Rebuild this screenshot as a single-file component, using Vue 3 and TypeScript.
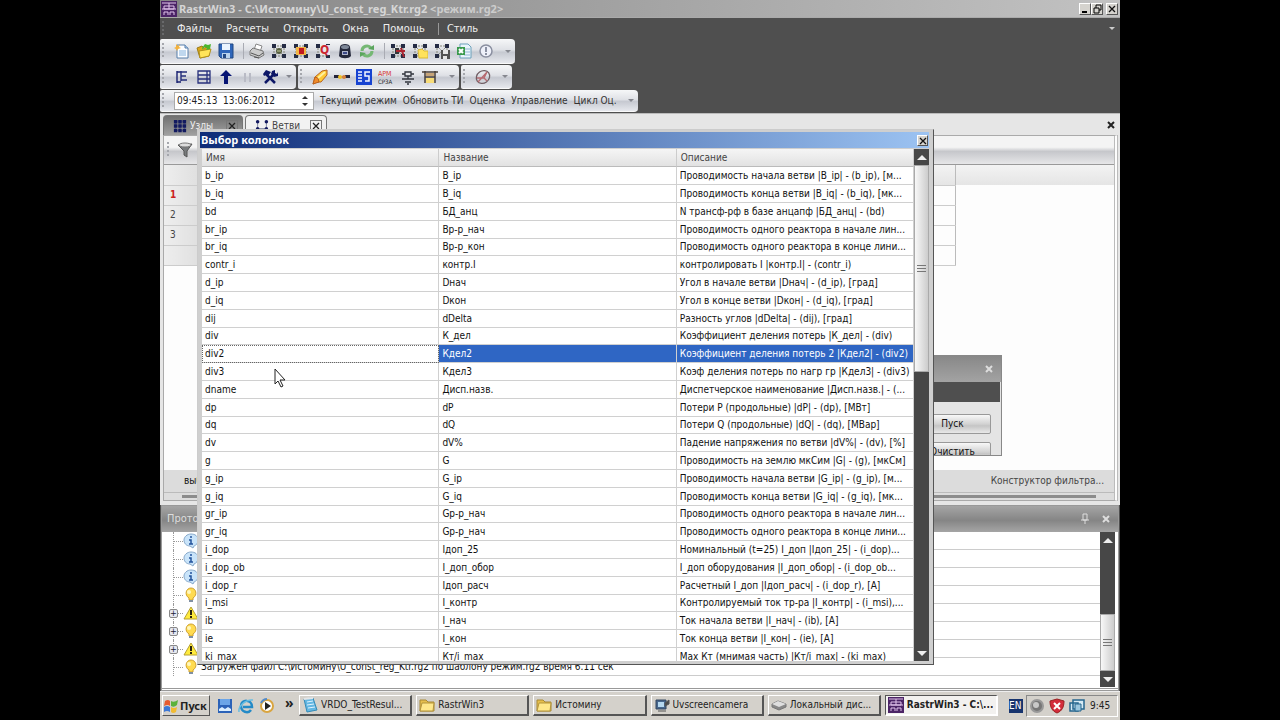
<script setup lang="ts">
import { ref } from 'vue'

interface Column { name: string; title: string; info: string }
interface LogNode { icon: string; expandable: boolean; text: string }

const menus = ['Файлы', 'Расчеты', 'Открыть', 'Окна', 'Помощь']
const fileTools = ['new', 'open', 'save', '|', 'print', 'net', 'netred', 'netq', 'db', 'refresh', '|', 'netcut', 'netopen', 'netsave', 'excel', 'clock']
const viewTools = ['tree', 'list', 'up', 'pause', 'tools']
const modeTools = ['eraser', 'link', 'digits', 'arm', 'ground', 'bridge']
const telemetry = ['Текущий режим', 'Обновить ТИ', 'Оценка', 'Управление', 'Цикл Оц.']
const clock = ref('09:45:13  13:06:2012')
const selected = ref('div2')

const columns: Column[] = [
  { name: 'b_ip', title: 'B_ip', info: 'Проводимость начала ветви |B_ip| - (b_ip), [м...' },
  { name: 'b_iq', title: 'B_iq', info: 'Проводимость конца ветви |B_iq| - (b_iq), [мк...' },
  { name: 'bd', title: 'БД_анц', info: 'N трансф-рф в базе анцапф |БД_анц| - (bd)' },
  { name: 'br_ip', title: 'Вр-р_нач', info: 'Проводимость одного реактора в начале лин...' },
  { name: 'br_iq', title: 'Вр-р_кон', info: 'Проводимость одного реактора в конце лини...' },
  { name: 'contr_i', title: 'контр.I', info: 'контролировать I |контр.I| - (contr_i)' },
  { name: 'd_ip', title: 'Dнач', info: 'Угол в начале ветви |Dнач| - (d_ip), [град]' },
  { name: 'd_iq', title: 'Dкон', info: 'Угол в конце ветви |Dкон| - (d_iq), [град]' },
  { name: 'dij', title: 'dDelta', info: 'Разность углов |dDelta| - (dij), [град]' },
  { name: 'div', title: 'К_дел', info: 'Коэффициент деления потерь |К_дел| - (div)' },
  { name: 'div2', title: 'Кдел2', info: 'Коэффициент деления потерь 2 |Кдел2| - (div2)' },
  { name: 'div3', title: 'Кдел3', info: 'Коэф деления потерь по нагр гр |Кдел3| - (div3)' },
  { name: 'dname', title: 'Дисп.назв.', info: 'Диспетчерское наименование |Дисп.назв.| - (...' },
  { name: 'dp', title: 'dP', info: 'Потери P (продольные) |dP| - (dp), [МВт]' },
  { name: 'dq', title: 'dQ', info: 'Потери Q (продольные) |dQ| - (dq), [МВар]' },
  { name: 'dv', title: 'dV%', info: 'Падение напряжения по ветви |dV%| - (dv), [%]' },
  { name: 'g', title: 'G', info: 'Проводимость на землю мкСим |G| - (g), [мкСм]' },
  { name: 'g_ip', title: 'G_ip', info: 'Проводимость начала ветви |G_ip| - (g_ip), [м...' },
  { name: 'g_iq', title: 'G_iq', info: 'Проводимость конца ветви |G_iq| - (g_iq), [мк...' },
  { name: 'gr_ip', title: 'Gр-р_нач', info: 'Проводимость одного реактора в начале лин...' },
  { name: 'gr_iq', title: 'Gр-р_нач', info: 'Проводимость одного реактора в конце лини...' },
  { name: 'i_dop', title: 'Iдоп_25', info: 'Номинальный (t=25) I_доп |Iдоп_25| - (i_dop)...' },
  { name: 'i_dop_ob', title: 'I_доп_обор', info: 'I_доп оборудования |I_доп_обор| - (i_dop_ob...' },
  { name: 'i_dop_r', title: 'Iдоп_расч', info: 'Расчетный I_доп |Iдоп_расч| - (i_dop_r), [А]' },
  { name: 'i_msi', title: 'I_контр', info: 'Контролируемый ток тр-ра |I_контр| - (i_msi),...' },
  { name: 'ib', title: 'I_нач', info: 'Ток начала ветви |I_нач| - (ib), [А]' },
  { name: 'ie', title: 'I_кон', info: 'Ток конца ветви |I_кон| - (ie), [А]' },
  { name: 'ki_max', title: 'Кт/i_max', info: 'Max Кт (мнимая часть) |Кт/i_max| - (ki_max)' },
]

const log: LogNode[] = [
  { icon: 'info', expandable: false, text: '' },
  { icon: 'info', expandable: false, text: '' },
  { icon: 'info', expandable: false, text: '' },
  { icon: 'bulb', expandable: false, text: '' },
  { icon: 'warn', expandable: true, text: '' },
  { icon: 'bulb', expandable: true, text: '' },
  { icon: 'warn', expandable: true, text: '' },
  { icon: 'bulb', expandable: false, text: 'Загружен файл C:\\Истомину\\U_const_reg_Ktr.rg2 по шаблону режим.rg2 время 6.11 сек' },
]

const tasks = [
  { icon: 'note', label: 'VRDO_TestResul...' },
  { icon: 'folder', label: 'RastrWin3' },
  { icon: 'folder', label: 'Истомину' },
  { icon: 'camera', label: 'Uvscreencamera' },
  { icon: 'disk', label: 'Локальный дис...' },
  { icon: 'rastr', label: 'RastrWin3 - C:\\...' },
]
</script>

<template>
  <svg class="defs" aria-hidden="true">
    <defs>
      <symbol id="rastr" viewBox="0 0 16 16"><rect width="16" height="16" fill="#4b2466" /><path d="M1 2h14M3 5h10v3H3zM1 8h14M3 14v-3h4v3M9 14v-3h4v3M8 2v6" fill="none" stroke="#e2c4ec" /></symbol>
      <symbol id="new" viewBox="0 0 16 16"><path d="M3 2h8l3 3v10H3z" fill="#fcfdff" stroke="#577eaa" /><path d="M5 7h7v6H5z" fill="#bfd7ee" /><path d="M11 2v3h3" fill="#b5d0ef" stroke="#577eaa" /><path d="M2 1l2 2 2-2-1 3 2 1-3 1-1 2-1-2-2-1 2-1z" fill="#f5b23b" /></symbol>
      <symbol id="open" viewBox="0 0 16 16"><path d="M1 5l5-2 2 2 5-1v9l-9 2z" fill="#dda719" stroke="#9c7c18" /><path d="M3 8l12-2-2 7-9 2z" fill="#ffe45a" stroke="#b3911b" /><path d="M6 5l3-4 3 1 3-1-1 5-4 1 1-2-3-1-1 3z" fill="#4bb62e" /></symbol>
      <symbol id="save" viewBox="0 0 16 16"><path d="M1 1h14v14H3l-2-2z" fill="#2f66ba" stroke="#214680" /><path d="M4 1h8v6H4z" fill="#eaf4ff" /><path d="M4 10h8v5H4z" fill="#b9d2ed" /><path d="M5 11h3v4H5z" fill="#244983" /></symbol>
      <symbol id="print" viewBox="0 0 16 16"><path d="M5 7l2-6 6 2-2 6z" fill="#fff" stroke="#888" /><path d="M1 8l3-3 10 3 1 4-5 3-9-3z" fill="#ccc" stroke="#777" /><path d="M2 10l8 3 4-3M5 14l5 1" stroke="#555" fill="none" /></symbol>
      <symbol id="netbase" viewBox="0 0 16 16"><path d="M3 3h10v10H3zM3 3l10 10M13 3L3 13" fill="none" stroke="#858779" stroke-dasharray="2 1" /><path d="M1 1h4v4H1zM11 1h4v4h-4zM1 11h4v4H1zM11 11h4v4h-4z" fill="#252c45" /></symbol>
      <symbol id="net" viewBox="0 0 16 16"><use href="#netbase" /><circle cx="8" cy="8" r="3" fill="#555e40" /><path d="M6 8h4" stroke="#c6cc9a" /></symbol>
      <symbol id="netred" viewBox="0 0 16 16"><use href="#netbase" /><path d="M3 4h10v8H3z" fill="#f2b545" /><path d="M6 5h5v6H6z" fill="#c01820" /></symbol>
      <symbol id="netq" viewBox="0 0 16 16"><use href="#netbase" /><path d="M5 2h10v10H5z" fill="#e6e7ea" /><text x="5" y="11" font-size="12" font-weight="700" fill="#cc2630">Q</text></symbol>
      <symbol id="db" viewBox="0 0 16 16"><path d="M3 4c0-4 10-4 10 0l1 9c-2 3-10 3-12 0z" fill="#25293b" /><ellipse cx="8" cy="4" rx="4" ry="2" fill="#7d8798" /><path d="M5 8h6v4H5z" fill="#aeb5cb" /><path d="M6 9h4v2H6z" fill="#3d4a88" /></symbol>
      <symbol id="refresh" viewBox="0 0 16 16"><path d="M3 8a5 5 0 0 1 9-3M13 8a5 5 0 0 1-9 3" fill="none" stroke="#75b874" stroke-width="3" /><path d="M9 6l6-4v5zM7 10l-6 4V9z" fill="#5aa55d" /></symbol>
      <symbol id="netcut" viewBox="0 0 16 16"><use href="#netbase" /><path d="M5 5h4v6H5z" fill="#34383b" /><path d="M6 8h9M11 5l3 9" stroke="#ac2430" stroke-width="2" /></symbol>
      <symbol id="netopen" viewBox="0 0 16 16"><use href="#netbase" /><path d="M6 7l4-1 2 2h4v7H7z" fill="#ffe25b" stroke="#dbba37" /></symbol>
      <symbol id="netsave" viewBox="0 0 16 16"><use href="#netbase" /><path d="M7 7h9v9H7z" fill="#555" /><path d="M9 7h5v4H9zM9 13h4v3H9z" fill="#e8e8e8" /></symbol>
      <symbol id="excel" viewBox="0 0 16 16"><path d="M4 1h8l3 3v11H4z" fill="#e9f4fb" stroke="#6da1bb" /><path d="M8 6h6M8 9h6M8 12h6" stroke="#91b7d2" /><path d="M1 4h8v8H1z" fill="#3a9a4d" /><path d="M3 6l4 4M7 6l-4 4" stroke="#fff" stroke-width="2" /></symbol>
      <symbol id="clock" viewBox="0 0 16 16"><circle cx="8" cy="8" r="6" fill="#eef0f9" stroke="#8a8fa0" stroke-width="1.5" /><path d="M8 4v5M8 10v2" stroke="#6b7187" stroke-width="1.5" /></symbol>
      <symbol id="tree" viewBox="0 0 16 16"><path d="M3 2v12M3 3h4M3 13h4" stroke="#172070" stroke-width="1.4" fill="none" /><path d="M7 3h6M7 7h5M7 11h6M7 2v10" stroke="#27307c" stroke-width="1.4" /></symbol>
      <symbol id="list" viewBox="0 0 16 16"><path d="M2 2h12v12H2zM2 6h12M2 10h12M11 2v12" fill="none" stroke="#27307c" stroke-width="1.3" /></symbol>
      <symbol id="up" viewBox="0 0 16 16"><path d="M8 1l6 6h-4v8H6V7H2z" fill="#061474" /></symbol>
      <symbol id="pause" viewBox="0 0 16 16"><path d="M5 4v9M10 4v9" stroke="#b9bbc5" stroke-width="2" /></symbol>
      <symbol id="tools" viewBox="0 0 16 16"><path d="M4 5l9 9M12 5l-9 9" stroke="#0d1767" stroke-width="2.5" /><path d="M1 5l3-4 5 2-3 4-2-1-2 1zM10 2l3-1v3l2 1 1-2v4l-4 1-3-3z" fill="#0d1767" /></symbol>
      <symbol id="eraser" viewBox="0 0 16 16"><path d="M1 15l2-7 7-6 5-1v5l-6 7-4 0z" fill="#ffc936" stroke="#b8611d" /><path d="M3 8l3 1 1 4-6 2z" fill="#f08b2c" stroke="#b8611d" /><path d="M6 9l7-6" stroke="#fff0a0" stroke-width="2" /></symbol>
      <symbol id="link" viewBox="0 0 16 16"><path d="M0 8h16" stroke="#7c4938" /><path d="M0 6h5v3H0zM11 6h5v3h-5z" fill="#24243b" /><circle cx="6" cy="8" r="2" fill="#eec126" /><circle cx="10" cy="8" r="2" fill="#d9813a" /></symbol>
      <symbol id="digits" viewBox="0 0 16 16"><path d="M0 0h16v16H0z" fill="#1743d1" /><path d="M2 3h4M2 6h4M2 9h4M2 12h4M14 3H9v4h4v5H9" fill="none" stroke="#f5f7ff" stroke-width="1.5" /></symbol>
      <symbol id="arm" viewBox="0 0 16 16"><text x="0" y="7" font-size="7" fill="#d63432">АРМ</text><text x="0" y="15" font-size="6" fill="#272727">СРЗА</text></symbol>
      <symbol id="ground" viewBox="0 0 16 16"><path d="M2 5h3M11 5h3M5 3h6v4H5zM8 7v3M2 10h12M5 13h6M7 15h2" fill="none" stroke="#30343d" stroke-width="1.3" /></symbol>
      <symbol id="bridge" viewBox="0 0 16 16"><path d="M0 3h16M3 2v12M13 2v12M3 8h10" fill="none" stroke="#4a4038" stroke-width="1.5" /><path d="M4 4h8v3H4z" fill="#c7a477" /><path d="M4 9h8v5H4z" fill="#f7dc78" /></symbol>
      <symbol id="meter" viewBox="0 0 16 16"><ellipse cx="8" cy="8" rx="7" ry="6" transform="rotate(-35 8 8)" fill="none" stroke="#705e64" stroke-width="1.3" /><path d="M3 13L12 3l-3 6M2 9h7l3 3" fill="none" stroke="#b76a70" stroke-width="1.3" /></symbol>
      <symbol id="nodes" viewBox="0 0 16 16"><path d="M3 3h10v10H3zM3 8h10M8 3v10" fill="none" stroke="#5d6484" /><path d="M1 1h4v4H1zM6 1h4v4H6zM11 1h4v4h-4zM1 6h4v4H1zM6 6h4v4H6zM11 6h4v4h-4zM1 11h4v4H1zM6 11h4v4H6zM11 11h4v4h-4z" fill="#131a60" /></symbol>
      <symbol id="branches" viewBox="0 0 16 16"><path d="M3 3v8M13 3v8M3 11h10" fill="none" stroke="#737c99" /><circle cx="3" cy="3" r="2" fill="#131a60" /><circle cx="13" cy="3" r="2" fill="#131a60" /><circle cx="3" cy="11" r="2" fill="#131a60" /><circle cx="13" cy="11" r="2" fill="#131a60" /></symbol>
      <symbol id="funnel" viewBox="0 0 16 16"><path d="M1 3l14-1-5 7v6l-3-2V9z" fill="#777a7c" stroke="#555" /><ellipse cx="8" cy="3" rx="6" ry="2" fill="#ddd" stroke="#777" /></symbol>
      <symbol id="info" viewBox="0 0 16 16"><path d="M8 1c4 0 7 2 7 6s-2 5-4 6l-1 2-3-2c-4 0-6-3-6-6s3-6 7-6z" fill="#c9e4fa" stroke="#86a8ca" /><path d="M8 3v2M6 7h2v4M6 11h4" fill="none" stroke="#23539d" stroke-width="1.5" /></symbol>
      <symbol id="bulb" viewBox="0 0 16 16"><path d="M6 11C1 8 3 1 8 1s7 7 2 10v2H6z" fill="#ffdb50" stroke="#cfa12f" /><circle cx="6" cy="5" r="2" fill="#fff7bd" /><path d="M6 13h4v2H6z" fill="#8090a2" /></symbol>
      <symbol id="warn" viewBox="0 0 16 16"><path d="M8 2l7 12H1z" fill="#ffeb3d" stroke="#b6a033" /><path d="M8 5v5M8 11v2" stroke="#292410" stroke-width="2" /></symbol>
      <symbol id="windows" viewBox="0 0 16 16"><path d="M2 3q3-2 5 0v5q-2-2-6 0z" fill="#e65b30" /><path d="M8 3q3 2 7-1l-1 5q-3 3-6 1z" fill="#5ab23d" /><path d="M1 9q3-2 6 0v5q-3-2-6 0z" fill="#3c78d6" /><path d="M8 9q3 2 6 0l-1 5q-3 2-5 0z" fill="#f1bb32" /></symbol>
      <symbol id="desktop" viewBox="0 0 16 16"><path d="M1 1h14v14H1z" fill="#2b62b8" /><path d="M3 1h10v6H3z" fill="#6ba5e8" /><path d="M2 11l3-2 3 2 3-2 3 2v2H2z" fill="#dbefff" /></symbol>
      <symbol id="ie" viewBox="0 0 16 16"><path d="M13 12c-3 4-10 2-10-4 0-7 11-7 11 1H5" fill="none" stroke="#238ac7" stroke-width="2.5" /><path d="M1 14C0 8 8 1 15 2" fill="none" stroke="#67bde2" stroke-width="1.5" /></symbol>
      <symbol id="player" viewBox="0 0 16 16"><circle cx="8" cy="8" r="6" fill="#fff" stroke="#d9a540" stroke-width="2" /><path d="M2 5a7 7 0 0 1 6-4" stroke="#548bc9" stroke-width="2" fill="none" /><path d="M6 4l6 4-6 4z" fill="#222" /></symbol>
      <symbol id="note" viewBox="0 0 16 16"><path d="M2 2l9-1 4 12-10 2z" fill="#63b7e2" stroke="#348bb8" /><path d="M5 5l6-1M5 8l7-1M6 11l7-1" stroke="#dff3ff" /><path d="M2 2l9-1" stroke="#e3e6e8" stroke-width="2" /></symbol>
      <symbol id="folder" viewBox="0 0 16 16"><path d="M1 3h6l2 2h6v9H1z" fill="#e6bf4d" stroke="#a88934" /><path d="M3 6h12l-1 8H1z" fill="#ffe88a" stroke="#b3943c" /></symbol>
      <symbol id="camera" viewBox="0 0 16 16"><path d="M2 3h10v9H2z" fill="#47678e" stroke="#35475e" /><path d="M4 5h6v5H4z" fill="#b6d8ef" /><path d="M11 6l4-3v4l-4 2zM4 14h8" fill="#4a4a4a" stroke="#555" /></symbol>
      <symbol id="disk" viewBox="0 0 16 16"><path d="M1 7l6-3 8 3v3l-7 3-7-3z" fill="#888" stroke="#777" /><path d="M1 7l6-3 8 3-7 3z" fill="#dedede" /></symbol>
      <symbol id="sound" viewBox="0 0 16 16"><circle cx="8" cy="8" r="6" fill="#777" stroke="#999" stroke-width="2" /><circle cx="7" cy="7" r="3" fill="#c8c8c8" /></symbol>
      <symbol id="shield" viewBox="0 0 16 16"><path d="M8 1l7 2c0 6-2 10-7 12C3 13 1 9 1 3z" fill="#d32c3b" stroke="#922" /><path d="M5 5l6 6M11 5l-6 6" stroke="#fff" stroke-width="2" /></symbol>
      <symbol id="vm" viewBox="0 0 16 16"><path d="M1 5h8v8H1zM4 2h11v9H4z" fill="#d6eaf5" stroke="#26668e" stroke-width="1.5" /><path d="M6 6h6v7H6z" fill="#9dc7df" stroke="#26668e" /></symbol>
      <symbol id="pin" viewBox="0 0 10 12"><path d="M3 1h4v6H3zM1 7h8M5 7v4" fill="none" stroke="#ddd" /></symbol>
      <symbol id="cross" viewBox="0 0 10 10"><path d="M2 2l6 6M8 2L2 8" stroke="currentColor" stroke-width="2" /></symbol>
      <symbol id="thincross" viewBox="0 0 10 10"><path d="M2 2l6 6M8 2L2 8" stroke="currentColor" stroke-width="1.3" /></symbol>
    </defs>
  </svg>

  <div class="screen">
    <main class="desktop">
      <header class="titlebar">
        <svg class="ic"><use href="#rastr" /></svg>
        <h1>RastrWin3 - C:\Истомину\U_const_reg_Ktr.rg2 <span>&lt;режим.rg2&gt;</span></h1>
        <div class="winbtns">
          <button aria-label="Свернуть"><svg viewBox="0 0 10 10"><path d="M2 8h5" stroke="#000" stroke-width="2" /></svg></button>
          <button aria-label="Восстановить"><svg viewBox="0 0 10 10"><path d="M4 4V1h5v5H7M2 4h5v5H2z" fill="none" stroke="#000" /></svg></button>
          <button class="apart" aria-label="Закрыть"><svg><use href="#thincross" /></svg></button>
        </div>
      </header>

      <nav class="menubar">
        <i class="grip dim"></i>
        <button v-for="m in menus" :key="m">{{ m }}</button>
        <i class="bar"></i>
        <button>Стиль</button>
        <i class="arrow light"></i>
      </nav>

      <div class="toolrow">
        <div class="toolbar">
          <i class="grip"></i>
          <template v-for="(t, i) in fileTools" :key="i">
            <i v-if="t === '|'" class="sep"></i>
            <button v-else :aria-label="t"><svg class="ic"><use :href="'#' + t" /></svg></button>
          </template>
          <i class="arrow far"></i>
        </div>
      </div>
      <div class="toolrow second">
        <div class="toolbar"><i class="grip"></i><button v-for="t in viewTools" :key="t" :aria-label="t"><svg class="ic"><use :href="'#' + t" /></svg></button><i class="arrow"></i></div>
        <div class="toolbar"><i class="grip"></i><button v-for="t in modeTools" :key="t" :aria-label="t"><svg class="ic"><use :href="'#' + t" /></svg></button><i class="arrow far"></i></div>
        <div class="toolbar"><i class="grip"></i><button aria-label="Контроль"><svg class="ic"><use href="#meter" /></svg></button><i class="arrow far"></i></div>
      </div>
      <div class="toolrow third">
        <div class="toolbar">
          <i class="grip"></i>
          <div class="stamp"><input v-model="clock" aria-label="Время и дата"><span class="spin"><button class="u" aria-label="Больше"></button><button class="d" aria-label="Меньше"></button></span></div>
          <button v-for="t in telemetry" :key="t" class="txt">{{ t }}</button>
          <i class="arrow far"></i>
        </div>
      </div>

      <section class="work">
        <div class="tabs">
          <button class="tab off"><svg class="ic"><use href="#nodes" /></svg>Узлы<svg class="tx"><use href="#thincross" /></svg></button>
          <button class="tab"><svg class="ic"><use href="#branches" /></svg>Ветви<svg class="tx"><use href="#thincross" /></svg></button>
          <button class="plain" aria-label="Закрыть вкладку"><svg><use href="#cross" /></svg></button>
        </div>
        <div class="sheet">
          <div class="filterbar"><i class="grip"></i><svg class="ic"><use href="#funnel" /></svg></div>
          <div class="gridhead">
            <table class="branches">
              <tbody>
                <tr class="h"><th></th><td></td></tr>
                <tr><th class="red">1</th><td></td></tr>
                <tr><th>2</th><td></td></tr>
                <tr><th>3</th><td></td></tr>
                <tr><th></th><td></td></tr>
              </tbody>
            </table>
          </div>
          <div class="sheetfoot"><span>выбрано</span><a href="#">Конструктор фильтра...</a></div>
          <div class="hscroll"><i></i></div>
        </div>
      </section>

      <section class="log">
        <header><h2>Протокол</h2><svg class="pin"><use href="#pin" /></svg><button class="plain" aria-label="Закрыть протокол"><svg><use href="#cross" /></svg></button></header>
        <div class="logbody">
          <ul>
            <li v-for="(n, i) in log" :key="i">
              <span class="branch"><button v-if="n.expandable" aria-label="Развернуть">+</button></span>
              <svg class="ic"><use :href="'#' + n.icon" /></svg>
              <span class="msg">{{ n.text }}</span>
            </li>
          </ul>
          <div class="vscroll low"><i class="end"></i><i class="thumb"></i><i class="end down"></i></div>
        </div>
      </section>

      <footer class="taskbar">
        <button class="start"><svg class="ic"><use href="#windows" /></svg>Пуск</button>
        <div class="quick">
          <button aria-label="Рабочий стол"><svg class="ic"><use href="#desktop" /></svg></button>
          <button aria-label="Браузер"><svg class="ic"><use href="#ie" /></svg></button>
          <button aria-label="Проигрыватель"><svg class="ic"><use href="#player" /></svg></button>
          <b>»</b>
        </div>
        <div class="tasks">
          <button v-for="(t, i) in tasks" :key="i" :class="{ on: i === 5 }"><svg class="ic"><use :href="'#' + t.icon" /></svg><span>{{ t.label }}</span></button>
        </div>
        <span class="lang">EN</span>
        <div class="tray"><svg class="ic"><use href="#sound" /></svg><svg class="ic"><use href="#shield" /></svg><svg class="ic"><use href="#vm" /></svg><time>9:45</time></div>
      </footer>

      <aside class="mini">
        <header><button class="plain" aria-label="Закрыть панель"><svg><use href="#cross" /></svg></button></header>
        <div class="band"></div>
        <div class="minibody"><button>Пуск</button><button>Очистить</button></div>
      </aside>

      <section class="dialog" role="dialog" aria-labelledby="dlg">
        <header><h2 id="dlg">Выбор колонок</h2><button aria-label="Закрыть окно"><svg><use href="#thincross" /></svg></button></header>
        <div class="dlgbody">
          <div class="listwrap">
            <table>
              <thead><tr><th>Имя</th><th>Название</th><th>Описание</th></tr></thead>
              <tbody>
                <tr v-for="c in columns" :key="c.name" :class="{ sel: c.name === selected }" @click="selected = c.name">
                  <td>{{ c.name }}</td><td>{{ c.title }}</td><td>{{ c.info }}</td>
                </tr>
              </tbody>
            </table>
          </div>
          <div class="vscroll high"><i class="end"></i><i class="thumb"></i><i class="end down"></i></div>
        </div>
      </section>

      <svg class="pointer" viewBox="0 0 12 20" aria-hidden="true"><path d="M1 1v15l3-3 3 6 2-1-3-6h5z" fill="#fff" stroke="#222" /></svg>
    </main>
  </div>
</template>

<style>
body { background: #000; }
</style>

<style scoped>
* { box-sizing: border-box; }
.screen { display: flex; justify-content: center; background: #000; font: 10px/14px "DejaVu Sans Condensed", "DejaVu Sans", sans-serif; color: #111; }
.defs { position: absolute; width: 0; height: 0; }
.desktop { position: relative; width: 75%; height: 100vh; min-height: 720px; display: flex; flex-direction: column; background: #4f4f4f; overflow: hidden; }
button { font: inherit; color: inherit; border: 0; padding: 0; margin: 0; background: none; }
h1, h2 { font-size: 11px; line-height: 14px; margin: 0; white-space: nowrap; }
.titlebar h1, .dialog h2, .start, .quick b { font-family: "Noto Sans", sans-serif; }
i { display: block; flex: none; }
.ic { width: 16px; height: 16px; flex: none; display: block; }
.plain { width: 10px; height: 10px; }
.plain svg, .winbtns svg, .dialog header svg { display: block; width: 10px; height: 10px; }

.titlebar { flex: none; height: 18px; display: flex; align-items: center; gap: 2px; padding: 0 2px 0 1px; background: linear-gradient(90deg, #858585, #c2c2c2); border-bottom: 1px solid #aaa; color: #d6d6d6; }
.titlebar h1 span { color: #ccc; }
.winbtns { margin-left: auto; display: flex; }
.winbtns button, .dialog header button { width: 12px; height: 12px; background: #d5d3ce; border: 1px solid; border-color: #fff #555 #555 #fff; display: grid; place-items: center; color: #111; }
.winbtns .apart { margin-left: 3px; }
.menubar { flex: none; height: 21px; display: flex; align-items: center; color: #eee; }
.menubar button { margin-right: 14px; white-space: nowrap; font-size: 11px; }
.menubar .grip { margin-right: 13px; }
.menubar .bar { width: 1px; height: 12px; background: #999; margin-right: 8px; margin-left: -1px; }
.menubar .arrow { margin-left: auto; margin-right: 5px; }
.arrow { border: 3px solid transparent; border-top-color: #85878f; border-bottom: 0; width: 6px; height: 3px; }
.arrow.light { border-top-color: #ccc; }
.toolbar .arrow { margin-left: 2px; }
.toolbar .arrow.far { margin-left: 5px; }
.grip { width: 2px; height: 16px; margin: 0 10px 0 2px; background: repeating-linear-gradient(#a5a7ad 0 2px, transparent 2px 4px); }
.grip.dim { opacity: .3; }
.toolrow { flex: none; height: 26px; display: flex; gap: 2px; align-items: flex-start; }
.toolrow.second { height: 25px; }
.toolrow.third { height: 23px; }
.toolbar { height: 25px; display: flex; align-items: center; padding-right: 4px; border-radius: 2px 4px 4px 2px; background: linear-gradient(#f6f7f8, #dfe1e6 45%, #c6c9d1 55%, #e6e8ed); border-bottom: 1px solid #fafafa; }
.second .toolbar { height: 24px; }
.third .toolbar { height: 22px; }
.toolbar button { margin-right: 6px; }
.sep { width: 1px; height: 16px; background: #a9abb3; margin: 0 5px 0 3px; }
.stamp { display: flex; width: 140px; height: 18px; background: #fff; border: 1px solid #aaa; margin-right: 6px; }
.stamp input { flex: 1; width: 0; min-width: 0; border: 0; padding: 0 2px; font: inherit; color: #222; background: none; white-space: pre; outline: 0; }
.spin { width: 11px; display: flex; flex-direction: column; justify-content: center; gap: 4px; }
.spin button { border: 3px solid transparent; width: 6px; height: 3px; margin: 0; }
.spin .u { border-bottom-color: #333; border-top: 0; }
.spin .d { border-top-color: #333; border-bottom: 0; }
.toolbar .txt { white-space: nowrap; color: #333; }

.work { flex: 1; min-height: 0; display: flex; flex-direction: column; padding: 0 2px 4px 3px; background: #e6e6e6; border-top: 1px solid #bbb; }
.tabs { flex: none; height: 21px; display: flex; align-items: flex-end; gap: 2px; }
.tab { width: 80px; height: 20px; display: flex; align-items: center; gap: 3px; padding: 0 4px 0 9px; border: 1px solid #777; border-bottom: 0; border-radius: 4px 4px 0 0; background: #f2f2f2; color: #444; }
.tab.off { background: linear-gradient(#707070, #a0a0a0); color: #eee; }
.tab .ic { width: 14px; height: 14px; }
.tab:not(.off) { width: 82px; }
.tx { margin-left: auto; width: 12px; height: 12px; border: 1px solid #777; color: #222; }
.tabs .plain { margin: 0 2px 5px auto; color: #222; }
.sheet { flex: 1; min-height: 0; display: flex; flex-direction: column; border: 1px solid #aaa; border-right: 4px double #bbb; background: #fdfdfd; }
.filterbar { flex: none; height: 29px; display: flex; align-items: center; background: linear-gradient(#f4f4f4 0 40%, #c6c7cb 55%, #e6e6e8); border-bottom: 1px solid #999; }
.filterbar .grip { margin: 0 8px 0 3px; }
.gridhead { flex: 1; min-height: 0; background: linear-gradient(#f3f3f3, #e5e5e5) 0 0 / 100% 20px no-repeat; }
.branches { width: calc(83% + 3px); border-collapse: collapse; }
.branches th, .branches td { height: 20px; padding: 0; border-bottom: 1px solid #ccc; border-right: 1px solid #bbb; }
.branches th { width: 40px; font-weight: 400; text-align: left; padding-left: 6px; background: linear-gradient(90deg, #eee, #ddd); color: #444; }
.branches .red { color: #c22; font-weight: 700; }
.sheetfoot { flex: none; height: 22px; display: flex; justify-content: space-between; align-items: center; padding: 0 10px 0 20px; background: #dcdcdc; }
.sheetfoot a { color: #444; text-decoration: none; }
.hscroll { flex: none; height: 8px; background: #ddd; padding: 2px 18px; border-top: 1px solid #bbb; }
.hscroll i { height: 3px; background: #8c8c8c; }

.log { flex: none; margin: 0 1px 0 1px; border: 1px solid #999; border-bottom: 3px double #999; background: #fff; }
.log header { height: 26px; display: flex; align-items: center; padding: 0 7px 0 5px; background: linear-gradient(#a5a5a5, #858585 55%, #a5a5a5); color: #ddd; }
.log h2 { font-weight: 400; flex: 1; }
.pin { width: 10px; height: 12px; margin-right: 11px; }
.logbody { display: flex; height: 156px; padding: 0 3px 1px 0; }
.logbody ul { list-style: none; margin: 0; padding: 0; flex: 1; min-width: 0; }
.logbody li { display: flex; height: 18px; align-items: center; }
.branch { align-self: stretch; width: 10px; margin-left: 11px; border-left: 1px dotted #999; display: flex; align-items: center; }
.branch::after { content: ""; flex: 1; border-top: 1px dotted #999; }
.branch button { width: 9px; height: 9px; margin-left: -5px; border: 1px solid #888; border-radius: 2px; background: #e6e8f0; font-size: 9px; line-height: 7px; color: #223; }
.msg { flex: 1; align-self: stretch; margin-left: 1px; padding: 2px 1px; border-bottom: 1px solid #ccc; white-space: nowrap; }
.vscroll { flex: none; width: 15px; display: flex; flex-direction: column; background: #474747; }
.end { width: 15px; height: 16px; display: grid; place-items: center; }
.end::after { content: ""; border: 5px solid transparent; border-top: 0; border-bottom-color: #eee; }
.end.down { margin-top: auto; }
.end.down::after { border: 5px solid transparent; border-bottom: 0; border-top-color: #eee; }
.thumb { display: grid; place-items: center; border: 1px solid #aaa; background: linear-gradient(90deg, #f8f8f8, #ccc); }
.thumb::after { content: ""; width: 9px; height: 8px; background: repeating-linear-gradient(#777 0 1px, transparent 1px 3px); }
.low .thumb { margin-top: 66px; height: 57px; }
.high .thumb { height: 207px; }

.taskbar { flex: none; height: 29px; display: flex; align-items: center; padding: 2px 2px 3px; background: #d4d1cb; border-top: 1px solid #eee; color: #222; }
.start, .tasks button { display: flex; align-items: center; height: 21px; border: 1px solid; border-color: #fff #555 #555 #fff; }
.start { width: 48px; font-size: 11px; font-weight: 700; gap: 1px; }
.quick { display: flex; align-items: center; gap: 5px; width: 89px; padding-left: 7px; }
.quick b { font-size: 14px; margin-left: 5px; margin-bottom: 6px; }
.tasks { flex: 1; min-width: 0; display: flex; gap: 4px; }
.tasks button { flex: 1; width: 0; min-width: 0; gap: 3px; padding: 0 2px; border-right-width: 2px; border-bottom-width: 2px; }
.tasks span { overflow: hidden; white-space: nowrap; }
.tasks .on { background: #f2f1ef; border-color: #555 #fff #fff #555; font-weight: 700; }
.lang { width: 14px; margin: 0 3px 0 11px; background: #17346e; color: #fff; overflow: hidden; }
.tray { display: flex; align-items: center; gap: 4px; width: 92px; height: 22px; padding: 0 2px; border: 1px solid; border-color: #888 #fff #fff #888; }
.tray time { margin-left: 1px; }

.mini { position: absolute; right: 118px; top: 355px; width: 100px; border: 1px solid #888; background: #e4e4e4; }
.mini header { height: 26px; display: flex; align-items: center; justify-content: flex-end; padding-right: 7px; background: linear-gradient(#888, #a3a3a3); color: #ddd; }
.band { height: 20px; background: #4f4f4f; margin-right: 1px; }
.minibody { height: 53px; overflow: hidden; padding: 12px 10px 0 0; display: flex; flex-direction: column; gap: 8px; }
.minibody button { height: 20px; flex: none; border: 1px solid #999; border-radius: 2px; padding-left: 11px; background: linear-gradient(#f8f8f8, #d2d2d2 50%, #c5c5c5 60%, #e8e8e8); }

.dialog { position: absolute; left: 37px; top: 129px; width: calc(77% - 2px); border: 1px solid; border-color: #ccc #555 #555 #ccc; padding: 2px 4px 3px 2px; background: #cfcfcf; }
.dialog header { height: 16px; display: flex; align-items: center; justify-content: space-between; padding: 0 1px; color: #fff; background: linear-gradient(90deg, #0e2c78, #9cc3f2); }
.dialog header button { width: 11px; height: 11px; }
.dlgbody { display: flex; margin-top: 1px; padding-left: 2px; }
.listwrap { flex: 1; min-width: 0; height: 512px; overflow: hidden; background: #fff; }
.dialog table { width: 100%; table-layout: fixed; border-collapse: separate; border-spacing: 0; }
.dialog th { height: 18px; padding: 0 4px; text-align: left; font-weight: 400; color: #444; background: linear-gradient(#f5f5f5, #e2e2e2); border-bottom: 1px solid #bbb; border-right: 1px solid #ccc; }
.dialog tbody tr { height: 18px; }
.dialog tbody tr:nth-child(5n) { height: 17px; }
.dialog td { padding: 0 0 0 3px; border-bottom: 1px solid #d0d0d0; border-right: 1px solid #d0d0d0; white-space: nowrap; overflow: hidden; }
.sel td:not(:first-child) { background: #2f66c4; color: #fff; }
.sel td:first-child { outline: 1px dotted #666; outline-offset: -1px; }
.pointer { position: absolute; left: 114px; top: 368px; width: 12px; height: 20px; }
</style>
